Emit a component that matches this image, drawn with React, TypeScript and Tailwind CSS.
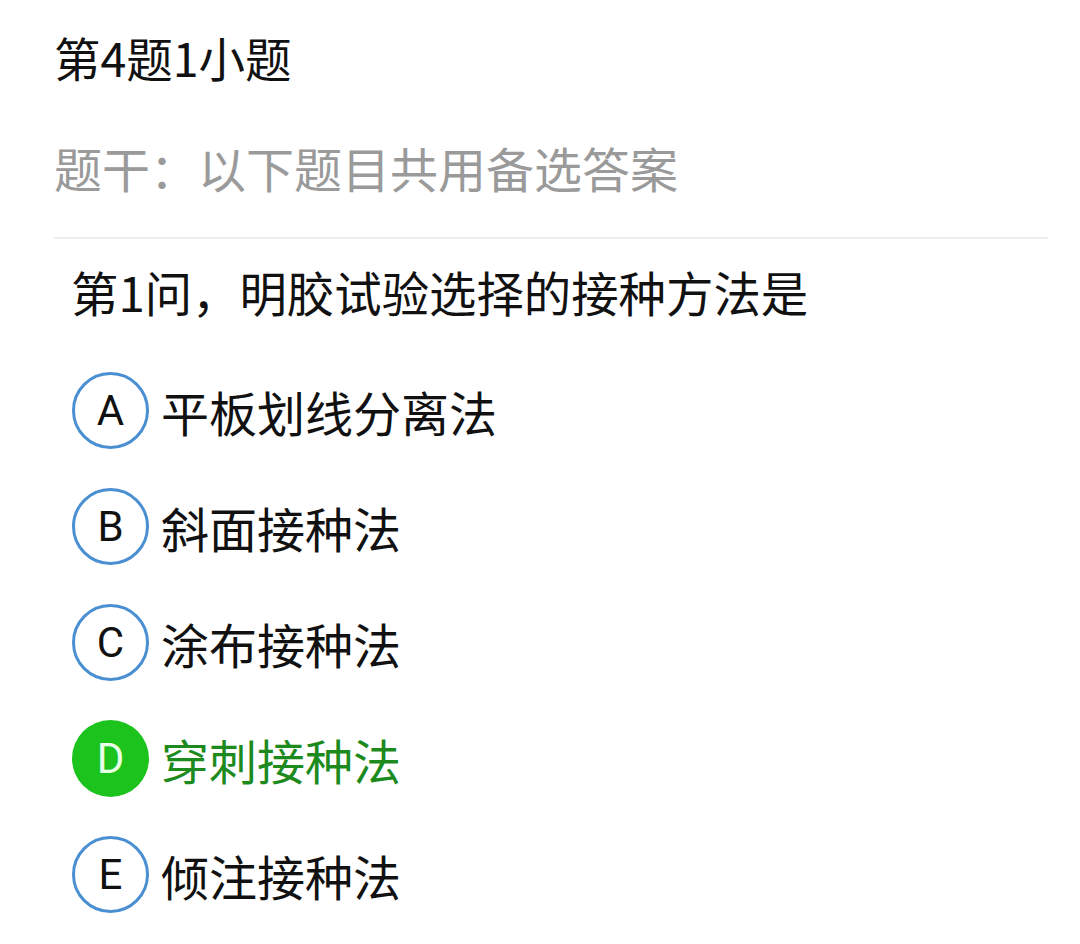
import React from "react";

const options = [
  { k: "A", t: "平板划线分离法", correct: false },
  { k: "B", t: "斜面接种法", correct: false },
  { k: "C", t: "涂布接种法", correct: false },
  { k: "D", t: "穿刺接种法", correct: true },
  { k: "E", t: "倾注接种法", correct: false },
];

export default function App() {
  return (
    <div
      className="w-[1080px] h-[944px] bg-white overflow-hidden pl-[54px] pr-[32px]"
      style={{ fontFamily: '"Noto Sans CJK SC", "Noto Sans", sans-serif' }}
    >
      <div className="mt-[27px] text-[46.5px] leading-[60px] text-[#111111]">第4题1小题</div>
      <div className="mt-[50px] text-[48px] leading-[60px] text-[#9a9a9a]">题干：以下题目共用备选答案</div>
      <div className="mt-[40px] h-[2px] bg-[#eeeeee]" />
      <div className="mt-[23px] ml-[17px] text-[47.4px] leading-[60px] text-[#111111]">第1问，明胶试验选择的接种方法是</div>
      <div className="mt-[50px] ml-[18px] flex flex-col gap-[39px]">
        {options.map((o) => (
          <div key={o.k} className="flex items-center h-[77px]">
            {o.correct ? (
              <div
                className="w-[77px] h-[77px] rounded-full bg-[#1cc31c] flex items-center justify-center text-[42px] font-normal text-[#e6ffe6]"
                style={{ fontFamily: 'Roboto, "Liberation Sans", sans-serif' }}
              >
                {o.k}
              </div>
            ) : (
              <div
                className="w-[77px] h-[77px] rounded-full border-[3px] border-[#4a8fd2] flex items-center justify-center text-[42px] font-normal text-[#111111]"
                style={{ fontFamily: 'Roboto, "Liberation Sans", sans-serif' }}
              >
                {o.k}
              </div>
            )}
            <div
              className={`ml-[12px] text-[48px] leading-[60px] ${o.correct ? "text-[#1c8a1c]" : "text-[#111111]"}`}
            >
              {o.t}
            </div>
          </div>
        ))}
      </div>
    </div>
  );
}
